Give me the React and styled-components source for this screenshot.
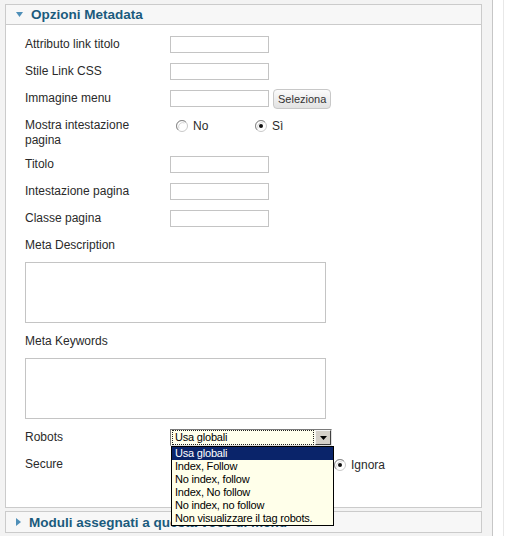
import React from "react";
import styled, { createGlobalStyle } from "styled-components";

const Global = createGlobalStyle`
  html, body { margin: 0; padding: 0; background: #fff; }
  body { font-family: "Liberation Sans", Arial, sans-serif; }
  * { box-sizing: border-box; }
`;

const Page = styled.div`
  width: 504px;
  min-height: 536px;
  border-right: 1px solid #e8e8e8;
  background: #fff;
`;

const Frame = styled.div`
  width: 493px;
  min-height: 536px;
  background: #f3f3f3;
  border-right: 1px solid #c6c6c6;
  padding: 4px 10px 0 5px;
  display: flex;
  flex-direction: column;
  gap: 3px;
`;

const Panel = styled.section`
  border: 1px solid #cbcbcb;
  background: #fff;
`;

const PanelHeader = styled.h3`
  margin: 0;
  height: 20px;
  display: flex;
  align-items: center;
  gap: 8px;
  padding-left: 10px;
  background: #f7f7f7;
  border-bottom: ${(p) => (p.$open ? "1px solid #cbcbcb" : "none")};
  font-family: "Liberation Sans", Arial, sans-serif;
  font-size: 13.5px;
  font-weight: bold;
  color: #1b5b7d;
  white-space: nowrap;
  overflow: hidden;
`;

const Caret = styled.svg`
  flex: none;
  display: block;
`;

const PanelBody = styled.div`
  padding: 6px 0 29px 19px;
`;

const FormRow = styled.div`
  display: grid;
  grid-template-columns: 145px 1fr;
  min-height: 27px;
  align-items: start;
`;

const Label = styled.div`
  padding: 6px 20px 3px 0;
  line-height: 15px;
  font-size: 12px;
  color: #2a2a2a;
`;

const Field = styled.div`
  height: 27px;
  display: flex;
  align-items: center;
  gap: 4px;
`;

const TextInput = styled.div`
  width: 99px;
  height: 17px;
  border: 1px solid #c4c4c4;
  background: #fff;
`;

const Button = styled.div`
  height: 20px;
  padding: 0 4px;
  display: flex;
  align-items: center;
  border: 1px solid #c8c8c8;
  border-radius: 4px;
  background: linear-gradient(#fbfbfb, #e2e2e2);
  font-size: 11px;
  color: #333;
`;

const RadioGroup = styled.div`
  display: flex;
`;

const RadioOption = styled.div`
  width: 79px;
  padding-left: 6px;
  display: flex;
  align-items: center;
  gap: 5px;
  font-size: 12px;
  color: #2a2a2a;
`;

const Block = styled.div`
  display: flex;
  flex-direction: column;
`;

const TextArea = styled.div`
  width: 301px;
  height: 61px;
  margin: 6px 0 5px;
  border: 1px solid #c4c4c4;
  background: #fff;
`;

const SelectBox = styled.div`
  position: relative;
  width: 162px;
  height: 17px;
  display: flex;
  align-items: stretch;
  border: 1px solid;
  border-color: #7a7a7a #e0e0e0 #e0e0e0 #7a7a7a;
  background: #ffffec;
  font-family: "Liberation Sans", Tahoma, sans-serif;
  font-size: 11px;
  letter-spacing: -0.2px;
`;

const SelectValue = styled.div`
  flex: 1;
  margin: 0 1px 0 1px;
  border: 1px dotted #222;
  padding-left: 2px;
  line-height: 13px;
  color: #000;
`;

const SelectArrow = styled.div`
  width: 16px;
  display: flex;
  align-items: center;
  justify-content: center;
  background: #d4d0c8;
  border: 1px solid;
  border-color: #f4f4f4 #404040 #404040 #f4f4f4;
`;

const OptionList = styled.ul`
  position: absolute;
  top: 16px;
  left: 0;
  width: 163px;
  margin: 0;
  padding: 0;
  list-style: none;
  border: 1px solid #000;
  background: #ffffea;
  z-index: 10;
`;

const OptionItem = styled.li`
  height: 13px;
  line-height: 13px;
  padding-left: 3px;
  white-space: nowrap;
  background: ${(p) => (p.$selected ? "#0a246a" : "transparent")};
  color: ${(p) => (p.$selected ? "#fff" : "#000")};
`;

const Radio = ({ checked }) => (
  <svg width="12" height="12" viewBox="0 0 12 12">
    <circle cx="6" cy="6" r="5.5" fill="#fff" stroke="#c9c9c9" />
    <path d="M2.1 9.9 A5.5 5.5 0 0 1 9.9 2.1" fill="none" stroke="#8a8a8a" />
    <path d="M3 8.6 A4.2 4.2 0 0 1 8.6 3" fill="none" stroke="#d8d8d8" />
    {checked && <circle cx="6" cy="6" r="2" fill="#111" />}
  </svg>
);

const RadioField = ({ options, value }) => (
  <Field>
    <RadioGroup>
      {options.map((o) => (
        <RadioOption key={o}>
          <Radio checked={o === value} />
          {o}
        </RadioOption>
      ))}
    </RadioGroup>
  </Field>
);

const robotsOptions = [
  "Usa globali",
  "Index, Follow",
  "No index, follow",
  "Index, No follow",
  "No index, no follow",
  "Non visualizzare il tag robots.",
];

export default function App() {
  return (
    <>
      <Global />
      <Page>
        <Frame>
          <Panel>
            <PanelHeader $open>
              <Caret width="7" height="5" viewBox="0 0 7 5">
                <polygon points="0,0 7,0 3.5,5" fill="#4f8fb8" />
              </Caret>
              Opzioni Metadata
            </PanelHeader>
            <PanelBody>
              <FormRow>
                <Label>Attributo link titolo</Label>
                <Field><TextInput /></Field>
              </FormRow>
              <FormRow>
                <Label>Stile Link CSS</Label>
                <Field><TextInput /></Field>
              </FormRow>
              <FormRow>
                <Label>Immagine menu</Label>
                <Field>
                  <TextInput />
                  <Button>Seleziona</Button>
                </Field>
              </FormRow>
              <FormRow>
                <Label>Mostra intestazione pagina</Label>
                <RadioField options={["No", "Sì"]} value="Sì" />
              </FormRow>
              <FormRow>
                <Label>Titolo</Label>
                <Field><TextInput /></Field>
              </FormRow>
              <FormRow>
                <Label>Intestazione pagina</Label>
                <Field><TextInput /></Field>
              </FormRow>
              <FormRow>
                <Label>Classe pagina</Label>
                <Field><TextInput /></Field>
              </FormRow>
              <Block>
                <Label>Meta Description</Label>
                <TextArea />
              </Block>
              <Block>
                <Label>Meta Keywords</Label>
                <TextArea />
              </Block>
              <FormRow>
                <Label>Robots</Label>
                <Field>
                  <SelectBox>
                    <SelectValue>Usa globali</SelectValue>
                    <SelectArrow>
                      <svg width="7" height="4" viewBox="0 0 7 4">
                        <polygon points="0,0 7,0 3.5,4" fill="#000" />
                      </svg>
                    </SelectArrow>
                    <OptionList>
                      {robotsOptions.map((o, i) => (
                        <OptionItem key={o} $selected={i === 0}>{o}</OptionItem>
                      ))}
                    </OptionList>
                  </SelectBox>
                </Field>
              </FormRow>
              <FormRow>
                <Label>Secure</Label>
                <RadioField options={["No", "Sì", "Ignora"]} value="Ignora" />
              </FormRow>
            </PanelBody>
          </Panel>
          <Panel>
            <PanelHeader>
              <Caret width="5" height="8" viewBox="0 0 5 8">
                <polygon points="0,0 5,4 0,8" fill="#4f8fb8" />
              </Caret>
              Moduli assegnati a questa voce di menu
            </PanelHeader>
          </Panel>
        </Frame>
      </Page>
    </>
  );
}
